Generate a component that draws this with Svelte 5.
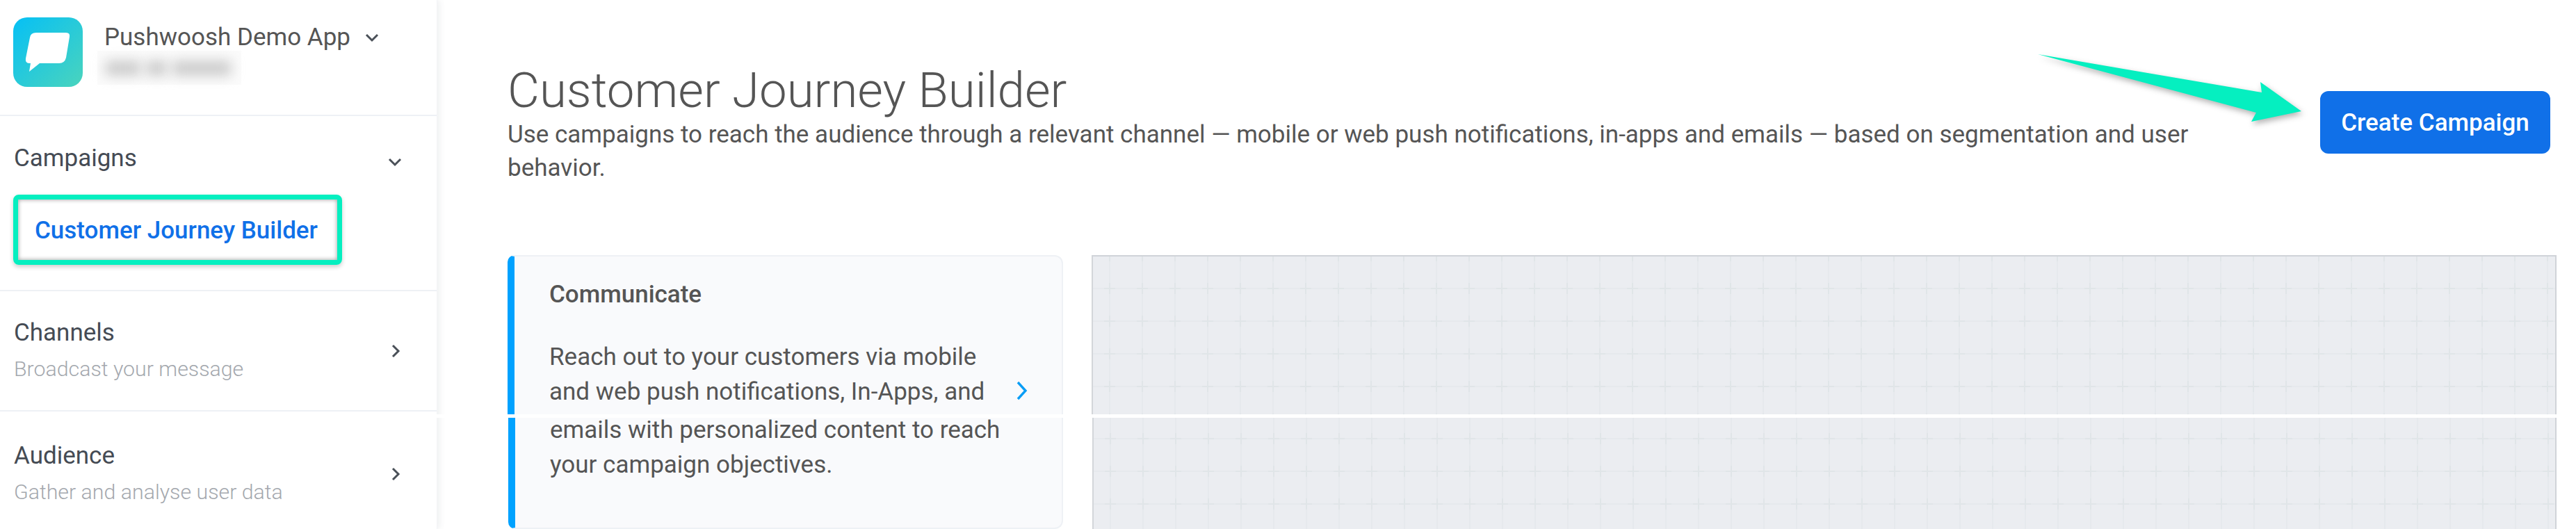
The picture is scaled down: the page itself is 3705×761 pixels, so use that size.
<script lang="ts">
	const groups = [
		{ title: 'Channels', sub: 'Broadcast your message' },
		{ title: 'Audience', sub: 'Gather and analyse user data' }
	];
</script>

{#snippet grid(id: string, y: number)}
	<svg class="grid" width="100%" height="100%" aria-hidden="true">
		<defs>
			<pattern {id} width="47" height="47" patternUnits="userSpaceOnUse" x="1" {y}>
				<path d="M23 0V47M0 23H47" stroke="#e6e9ed" stroke-width="2" fill="none" />
				<path d="M23 15V31M15 23H31" stroke="#e0e5e8" stroke-width="2" fill="none" />
			</pattern>
		</defs>
		<rect width="100%" height="100%" fill="url(#{id})" />
	</svg>
{/snippet}

<div class="page">
	<aside class="sidebar">
		<div class="tear"></div>
		<div class="app-head">
			<div class="logo">
				<svg width="100" height="100" viewBox="0 0 100 100">
					<defs>
						<linearGradient id="logo-fill" x1="0" y1="0" x2="1" y2="1">
							<stop offset="0" stop-color="#06c0f5" />
							<stop offset="1" stop-color="#4ad4bd" />
						</linearGradient>
					</defs>
					<rect width="100" height="100" rx="20" fill="url(#logo-fill)" />
					<path
						d="M33 22H76Q82 22 81 28L76 58Q74 66 66 66H38L23 78L25 66H23Q17 66 18 59L24 29Q25 22 33 22Z"
						fill="#fff"
					/>
				</svg>
			</div>
			<div class="app-info">
				<div class="app-name">
					<span>Pushwoosh Demo App</span>
					<svg class="chev" width="20" height="14" viewBox="0 0 20 14">
						<path d="M2 3L10 11L18 3" fill="none" stroke="#4a5058" stroke-width="3" />
					</svg>
				</div>
				<div class="app-id">
					<i style="width:50px"></i><i style="width:30px"></i><i style="width:84px"></i>
				</div>
			</div>
		</div>

		<section class="group open">
			<div class="group-head">
				<span class="group-title">Campaigns</span>
				<svg class="chev" width="20" height="14" viewBox="0 0 20 14">
					<path d="M2 3L10 11L18 3" fill="none" stroke="#4a5058" stroke-width="3" />
				</svg>
			</div>
			<div class="active-item">Customer Journey Builder</div>
		</section>

		{#each groups as g}
			<section class="group">
				<div>
					<div class="group-title">{g.title}</div>
					<div class="group-sub">{g.sub}</div>
				</div>
				<svg width="14" height="20" viewBox="0 0 14 20">
					<path d="M3 2L11 10L3 18" fill="none" stroke="#4a5058" stroke-width="3" />
				</svg>
			</section>
		{/each}
	</aside>

	<main class="content">
		<header class="head">
			<div class="head-text">
				<h1>Customer Journey Builder</h1>
				<p>
					Use campaigns to reach the audience through a relevant channel — mobile or web push
					notifications, in-apps and emails — based on segmentation and user behavior.
				</p>
			</div>
			<button class="create">Create Campaign</button>
		</header>

		<div class="journey">
			<div class="card card-top">
				<div class="card-text">
					<h2>Communicate</h2>
					<div class="line">Reach out to your customers via mobile</div>
					<div class="line">and web push notifications, In-Apps, and</div>
				</div>
				<svg class="card-chev" width="18" height="28" viewBox="0 0 18 28">
					<path d="M3 2L14 14L3 26" fill="none" stroke="#0a9df5" stroke-width="3.4" />
				</svg>
			</div>
			<div class="panel panel-top">{@render grid('grid-top', 23)}</div>
			<div class="card card-bottom">
				<div class="line">emails with personalized content to reach</div>
				<div class="line">your campaign objectives.</div>
			</div>
			<div class="panel panel-bottom">{@render grid('grid-bottom', 7)}</div>
		</div>
	</main>

	<svg class="arrow" width="400" height="120" viewBox="2920 70 400 120" aria-hidden="true">
		<path d="M2931 78L3253 133L3251 118L3310 160L3238 175L3245 162Z" fill="#05efc0" />
	</svg>
</div>

<style>
	:global(body) {
		margin: 0;
		background: #fff;
	}

	.page {
		position: relative;
		display: flex;
		height: 761px;
		overflow: hidden;
		font-family: Roboto, sans-serif;
		color: #555;
	}

	.sidebar {
		position: relative;
		flex: 0 0 629px;
		box-shadow: 4px 0 8px rgba(60, 70, 90, 0.07);
		border-right: 1px solid #f3f4f7;
		box-sizing: border-box;
		width: 629px;
	}

	.tear {
		position: absolute;
		top: 596px;
		left: 628px;
		width: 20px;
		height: 5px;
		background: #fff;
	}

	.app-head {
		display: flex;
		gap: 21px;
		box-sizing: border-box;
		padding: 25px 0 0 19px;
		border-bottom: 2px solid #eef1f5;
		height: 167px;
	}

	.logo {
		width: 100px;
		height: 100px;
	}

	.app-info {
		padding-top: 9px;
	}

	.app-name {
		display: flex;
		align-items: center;
		gap: 21px;
		margin-left: 10px;
		font-size: 35px;
		line-height: 40px;
		color: #555;
	}

	.app-id {
		display: flex;
		align-items: center;
		gap: 8px;
		width: 207px;
		height: 49px;
		box-sizing: border-box;
		padding-left: 12px;
		margin-top: -1px;
		background: #fbfbfb;
	}

	.app-id i {
		height: 20px;
		background: #c8c8c8;
		filter: blur(9px);
	}

	.group {
		display: flex;
		align-items: center;
		justify-content: space-between;
		height: 173px;
		box-sizing: border-box;
		padding: 0 52px 0 20px;
		border-bottom: 2px solid #eef1f5;
	}

	.group:last-child {
		margin-top: 3px;
		border-bottom: 0;
	}

	.group.open {
		display: block;
		height: 252px;
		padding: 41px 0 0 19px;
	}

	.group-head {
		display: flex;
		align-items: center;
		justify-content: space-between;
		padding: 0 50px 0 1px;
		height: 40px;
		position: relative;
	}

	.group-head .chev {
		position: relative;
		top: 5px;
	}

	.group-title {
		font-size: 35px;
		line-height: 40px;
		color: #454b54;
	}

	.group-sub {
		font-size: 30.3px;
		line-height: 40px;
		margin-top: 12px;
		color: #a4a8ae;
		font-weight: 300;
	}

	.active-item {
		width: 473px;
		height: 101px;
		box-sizing: border-box;
		margin-top: 32px;
		padding-left: 24px;
		border: 7px solid #05efc0;
		border-radius: 8px;
		box-shadow:
			0 3px 6px rgba(0, 0, 0, 0.2),
			inset 0 0 6px rgba(0, 0, 0, 0.4);
		font-size: 35px;
		font-weight: 500;
		line-height: 89px;
		color: #1070e8;
	}

	.content {
		flex: 1;
		padding: 0 37px 0 101px;
		min-width: 0;
	}

	.head {
		display: flex;
		align-items: flex-start;
		justify-content: space-between;
		padding-top: 90px;
		height: 277px;
		box-sizing: border-box;
	}

	.head-text {
		flex: 1;
		padding-right: 130px;
	}

	h1 {
		margin: 0;
		font-size: 70.8px;
		font-weight: 300;
		line-height: 80px;
		color: #555;
	}

	.head-text p {
		margin: 0;
		font-size: 35px;
		line-height: 48px;
		color: #555;
	}

	.create {
		flex: none;
		width: 331px;
		height: 90px;
		margin-top: 41px;
		border: 0;
		border-radius: 12px;
		background: #1070e8;
		color: #fff;
		font-family: inherit;
		font-size: 35px;
		font-weight: 500;
	}

	.journey {
		display: grid;
		grid-template-columns: 799px 1fr;
		grid-template-rows: 229px 160px;
		column-gap: 41px;
		row-gap: 5px;
		margin-top: 90px;
		margin-right: -9px;
	}

	.card {
		box-sizing: border-box;
		border-left: 10px solid #00a2ff;
		border-right: 2px solid #eef1f5;
		background: #f9fafc;
		padding-left: 50px;
		font-size: 35px;
		color: #555;
	}

	.card-top {
		display: flex;
		justify-content: space-between;
		align-items: flex-start;
		border-top: 2px solid #eef1f5;
		border-top-left-radius: 10px;
		border-top-right-radius: 12px;
		padding-top: 35px;
		padding-right: 48px;
	}

	.card-bottom {
		margin-left: 1px;
		border-bottom: 2px solid #eef1f5;
		border-bottom-left-radius: 10px;
		border-bottom-right-radius: 12px;
	}

	.card-bottom .line:first-child {
		margin-top: -7px;
	}

	.card-chev {
		margin-top: 144px;
	}

	h2 {
		margin: 0 0 45px;
		font-size: 35px;
		font-weight: 500;
		line-height: 40px;
		color: #555;
	}

	.line {
		height: 50px;
		line-height: 50px;
		white-space: nowrap;
	}

	.panel {
		box-sizing: border-box;
		background: #ebedf1;
		border-left: 2px solid #d3d6da;
		border-right: 2px solid #d0d3d8;
	}

	.panel-top {
		border-top: 2px solid #d0d3d8;
	}

	.panel-bottom {
		margin-left: 1px;
	}

	.grid {
		display: block;
	}

	.arrow {
		position: absolute;
		left: 2920px;
		top: 70px;
		overflow: visible;
		filter: drop-shadow(2px 4px 4px rgba(0, 0, 0, 0.3));
	}
</style>
